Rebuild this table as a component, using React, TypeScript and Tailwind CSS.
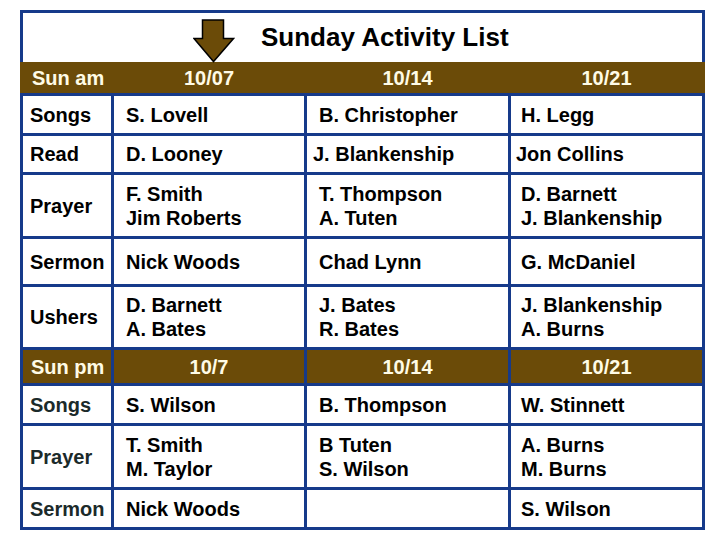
import React from "react";

const font = { fontFamily: '"Liberation Sans", Arial, sans-serif' };

type Row = { label: string; h: string; cells: { lines: string[]; pl: string }[]; dark?: boolean };

const amRows: Row[] = [
  { label: "Songs", h: "h-[37px]", cells: [
    { lines: ["S. Lovell"], pl: "pl-[12px]" },
    { lines: ["B. Christopher"], pl: "pl-[12px]" },
    { lines: ["H. Legg"], pl: "pl-[10px]" },
  ] },
  { label: "Read", h: "h-[36px]", cells: [
    { lines: ["D. Looney"], pl: "pl-[12px]" },
    { lines: ["J. Blankenship"], pl: "pl-[6px]" },
    { lines: ["Jon Collins"], pl: "pl-[5px]" },
  ] },
  { label: "Prayer", h: "h-[61px]", cells: [
    { lines: ["F. Smith", "Jim Roberts"], pl: "pl-[12px]" },
    { lines: ["T. Thompson", "A. Tuten"], pl: "pl-[12px]" },
    { lines: ["D. Barnett", "J. Blankenship"], pl: "pl-[10px]" },
  ] },
  { label: "Sermon", h: "h-[45px]", cells: [
    { lines: ["Nick Woods"], pl: "pl-[12px]" },
    { lines: ["Chad Lynn"], pl: "pl-[12px]" },
    { lines: ["G. McDaniel"], pl: "pl-[10px]" },
  ] },
  { label: "Ushers", h: "h-[60px]", cells: [
    { lines: ["D. Barnett", "A. Bates"], pl: "pl-[12px]" },
    { lines: ["J. Bates", "R. Bates"], pl: "pl-[12px]" },
    { lines: ["J. Blankenship", "A. Burns"], pl: "pl-[10px]" },
  ] },
];

const pmRows: Row[] = [
  { label: "Songs", h: "h-[37px]", dark: true, cells: [
    { lines: ["S. Wilson"], pl: "pl-[12px]" },
    { lines: ["B. Thompson"], pl: "pl-[12px]" },
    { lines: ["W. Stinnett"], pl: "pl-[10px]" },
  ] },
  { label: "Prayer", h: "h-[61px]", dark: true, cells: [
    { lines: ["T. Smith", "M. Taylor"], pl: "pl-[12px]" },
    { lines: ["B Tuten", "S. Wilson"], pl: "pl-[12px]" },
    { lines: ["A. Burns", "M. Burns"], pl: "pl-[10px]" },
  ] },
  { label: "Sermon", h: "h-[37px]", dark: true, cells: [
    { lines: ["Nick Woods"], pl: "pl-[12px]" },
    { lines: [], pl: "pl-[12px]" },
    { lines: ["S. Wilson"], pl: "pl-[10px]" },
  ] },
];

const cols = "grid grid-cols-[88px_190px_201px_191px] gap-x-[3px]";

function DataRow({ r }: { r: Row }) {
  return (
    <div className={`${cols} ${r.h}`}>
      <div className={`bg-white flex items-center pl-[7px] ${r.dark ? "text-[#1b2a2a]" : "text-black"}`}>{r.label}</div>
      {r.cells.map((c, i) => (
        <div key={i} className={`bg-white flex flex-col justify-center ${c.pl} text-black`}>
          {c.lines.map((l) => (
            <div key={l} className="leading-[24px]">{l}</div>
          ))}
        </div>
      ))}
    </div>
  );
}

function Arrow() {
  return (
    <svg className="absolute left-[170px] top-[6px]" width="42" height="44" viewBox="0 0 42 44">
      <path d="M9.5 1 H30.5 V19.5 H40.5 L20.5 42.5 L1 19.5 H9.5 Z" fill="#6b4b08" stroke="#000" strokeWidth="1.5" strokeLinejoin="miter" />
    </svg>
  );
}

export default function App() {
  return (
    <div className="w-[720px] h-[540px] bg-white pt-[10px] pl-[20px] text-[20px] font-bold" style={font}>
      <div className="w-[685px]">
        <div className="relative h-[52px] border-t-[3px] border-x-[3px] border-[#163a8a] flex items-center pl-[238px]">
          <Arrow />
          <span className="text-[26px] text-black">Sunday Activity List</span>
        </div>
        <div className={`${cols} px-[3px] h-[31px] bg-[#6b4b08] text-[#fffbe6] items-center`}>
          <div className="pl-[9px]">Sun am</div>
          <div className="text-center">10/07</div>
          <div className="text-center">10/14</div>
          <div className="text-center">10/21</div>
        </div>
        <div className="bg-[#163a8a] p-[3px] flex flex-col gap-y-[3px]">
          {amRows.map((r, i) => (
            <DataRow key={i} r={r} />
          ))}
          <div className={`${cols} h-[33px] text-[#fffbe6]`}>
            <div className="bg-[#6b4b08] flex items-center pl-[8px]">Sun pm</div>
            <div className="bg-[#6b4b08] flex items-center justify-center">10/7</div>
            <div className="bg-[#6b4b08] flex items-center justify-center">10/14</div>
            <div className="bg-[#6b4b08] flex items-center justify-center">10/21</div>
          </div>
          {pmRows.map((r, i) => (
            <DataRow key={i} r={r} />
          ))}
        </div>
      </div>
    </div>
  );
}
